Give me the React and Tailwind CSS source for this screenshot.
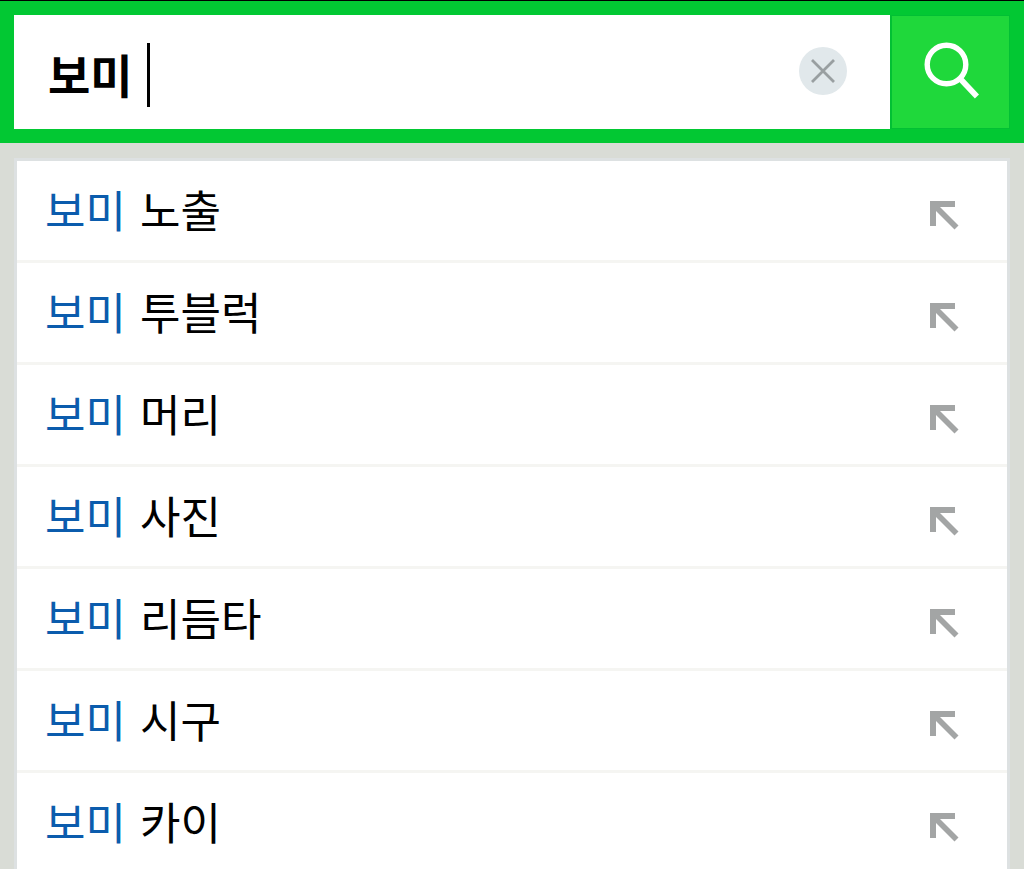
import { useState } from "react";

const KEYWORD = "보미";
const ENDINGS = ["노출", "투블럭", "머리", "사진", "리듬타", "시구", "카이"];

function ClearIcon() {
  return (
    <svg viewBox="0 0 48 48" className="size-12" fill="none" aria-hidden="true">
      <circle cx="24" cy="24" r="24" fill="#e1e8eb" />
      <path d="M13 13 35 35M35 13 13 35" stroke="#999fa1" strokeWidth="2.8" />
    </svg>
  );
}

function SearchIcon() {
  return (
    <svg viewBox="0 0 56 58" className="h-[58px] w-14" fill="none" stroke="#fff" aria-hidden="true">
      <circle cx="23.5" cy="22.5" r="19.3" strokeWidth="5.4" />
      <path d="M37 36.5 54 54.5" strokeWidth="5.8" />
    </svg>
  );
}

function FillArrowIcon() {
  return (
    <svg viewBox="0 0 30 30" className="size-[30px]" fill="none" stroke="#a3a5a5" aria-hidden="true">
      <path d="M4 26V4H26" strokeWidth="6" />
      <path d="M4 4 27.5 27.5" strokeWidth="5.6" />
    </svg>
  );
}

function Suggestion({ ending, onFill }) {
  return (
    <li className="flex h-[102px] items-center justify-between border-b-3 border-[#f5f5f2] pr-8 pl-7">
      <a
        href="#results"
        className="flex flex-1 gap-[14px] pb-1 text-[44px] leading-[60px] text-black"
      >
        <span className="text-[#0b5cad]">{KEYWORD}</span>
        <span>{ending}</span>
      </a>
      <button
        type="button"
        aria-label={`${KEYWORD} ${ending} 입력`}
        className="flex h-full items-center px-4 pt-2"
        onClick={onFill}
      >
        <FillArrowIcon />
      </button>
    </li>
  );
}

export default function App() {
  const [query, setQuery] = useState(KEYWORD + " ");

  return (
    <div className="min-h-screen overflow-hidden bg-[#d9dcd6] font-['Noto_Sans_CJK_KR',sans-serif]">
      <form
        className="flex border-t border-black bg-[#02c833] p-[14px]"
        onSubmit={(e) => e.preventDefault()}
      >
        <div className="relative flex h-[114px] min-w-0 flex-1 items-center bg-white pr-[43px]">
          <input
            type="text"
            aria-label="검색어"
            value={query}
            onChange={(e) => setQuery(e.target.value)}
            className="h-full min-w-0 flex-1 pt-0.5 pl-[34px] text-[46px] font-bold text-black caret-transparent outline-none"
          />
          <span
            aria-hidden="true"
            className="pointer-events-none absolute top-7 left-0 flex h-16 items-center pl-[34px] text-[46px] font-bold whitespace-pre"
          >
            <span className="invisible">{query}</span>
            <span className="ml-1 h-16 w-[3px] bg-black" />
          </span>
          <button type="button" aria-label="지우기" className="pb-0.5" onClick={() => setQuery("")}>
            <ClearIcon />
          </button>
        </div>
        <button
          type="submit"
          aria-label="검색"
          className="flex w-[120px] items-center justify-center border border-l-2 border-[#02c034] bg-[#1fd83b] pb-0.5"
        >
          <SearchIcon />
        </button>
      </form>

      <ul className="mx-[14px] mt-[15px] border-x-3 border-t-3 border-[#dde1e2] bg-white">
        {ENDINGS.map((ending) => (
          <Suggestion
            key={ending}
            ending={ending}
            onFill={() => setQuery(`${KEYWORD} ${ending}`)}
          />
        ))}
      </ul>
    </div>
  );
}
